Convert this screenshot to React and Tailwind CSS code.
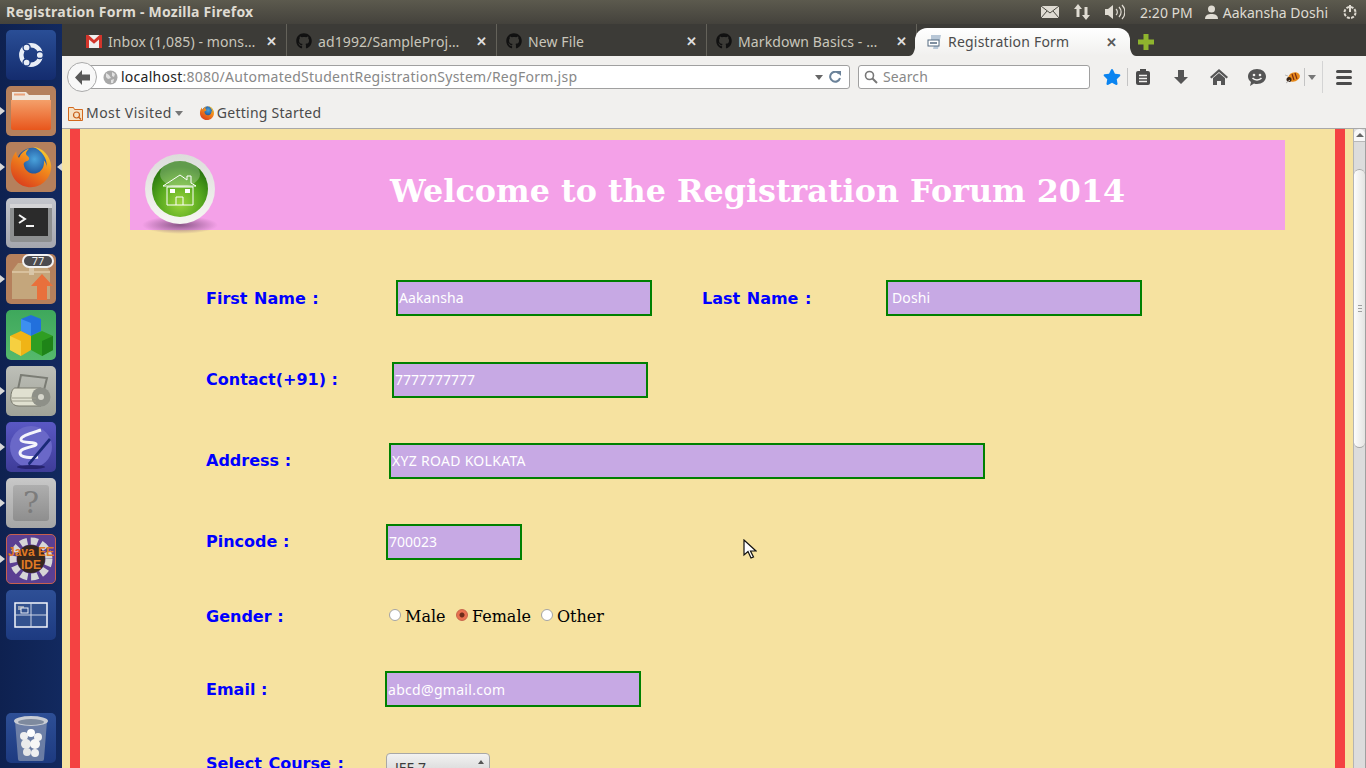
import { FaGithub, FaStar } from "react-icons/fa";

const uiFont = "font-['Noto_Sans','Open_Sans',sans-serif]";

function GmailIcon() {
    return (
        <svg width="16" height="13" viewBox="0 0 16 13" className="shrink-0">
            <rect x="0" y="0" width="16" height="13" fill="#eeeeee" />
            <path d="M0 0h2.500L8 5l5.500-5H16v13h-3V4.500L8 8.800 3 4.500V13H0z" fill="#d2352b" />
        </svg>
    );
}

function FirefoxIcon({ size = 16 }) {
    return (
        <svg width={size} height={size} viewBox="0 0 50 50" className="shrink-0">
            <defs>
                <radialGradient id="ffGlobe" cx="55%" cy="35%" r="60%">
                    <stop offset="0" stopColor="#4aa3dc" />
                    <stop offset="1" stopColor="#123a86" />
                </radialGradient>
                <linearGradient id="ffFox" x1="0.8" y1="0" x2="0.2" y2="1">
                    <stop offset="0" stopColor="#f9d22e" />
                    <stop offset="0.4" stopColor="#f28a1c" />
                    <stop offset="1" stopColor="#d8391c" />
                </linearGradient>
            </defs>
            <circle cx="27" cy="22" r="18" fill="url(#ffGlobe)" />
            <path d="M27 3C38 4 46 13 47 24 47 37 37 47 25 47 12 47 3 37 3 25 3 18 6 12 9 8 9 12 10 14 12 15 14 10 18 7 23 5 20 8 19 10 20 12 23 14 24 16 22 18 19 19 17 20 17 22 18 29 24 33 30 32 36 31 40 25 39 18 41 20 42 23 42 25 43 16 37 7 27 3Z" fill="url(#ffFox)" />
        </svg>
    );
}

function Tile({ className, children, left, right }) {
    return (
        <div className="relative w-[62px] h-[50px] shrink-0 flex justify-center">
            {left && <span className="absolute left-0 top-[21px] w-0 h-0 border-y-[4px] border-y-transparent border-l-[5px] border-l-[#d8d8d8]" />}
            {right && <span className="absolute right-0 top-[21px] w-0 h-0 border-y-[4px] border-y-transparent border-r-[5px] border-r-[#d8d8d8]" />}
            <div className={`w-[50px] h-[50px] rounded-[5px] flex items-center justify-center overflow-hidden ${className}`}>
                {children}
            </div>
        </div>
    );
}

function Launcher() {
    return (
        <div className="w-[62px] shrink-0 bg-gradient-to-r from-[#0e2150] to-[#12295f] flex flex-col gap-[6px] pt-[6px] pb-[5px]">
            <Tile className="bg-gradient-to-b from-[#2a4e96] to-[#142c6e]">
                <svg width="30" height="30" viewBox="0 0 34 34">
                    <circle cx="17" cy="17" r="11" fill="none" stroke="#e8edf6" strokeWidth="5" />
                    <circle cx="27" cy="17" r="4" fill="#e8edf6" stroke="#1e3c80" strokeWidth="1.500" />
                    <circle cx="12" cy="8.500" r="4" fill="#e8edf6" stroke="#1e3c80" strokeWidth="1.500" />
                    <circle cx="12" cy="25.500" r="4" fill="#e8edf6" stroke="#1e3c80" strokeWidth="1.500" />
                </svg>
            </Tile>
            <Tile left className="bg-[#b5805c]">
                <svg width="46" height="42" viewBox="0 0 46 42">
                    <defs>
                        <linearGradient id="folderFill" x1="0" y1="0" x2="0" y2="1">
                            <stop offset="0" stopColor="#f4a06a" />
                            <stop offset="1" stopColor="#e8561c" />
                        </linearGradient>
                    </defs>
                    <path d="M4 2h14l3 3h21v8H4z" fill="#efe6dc" />
                    <rect x="6" y="3.500" width="11" height="2" fill="#eaa27a" />
                    <path d="M3 10h40v28a2 2 0 0 1-2 2H5a2 2 0 0 1-2-2z" fill="url(#folderFill)" />
                </svg>
            </Tile>
            <Tile left right className="bg-[#b5805c]">
                <FirefoxIcon size={46} />
            </Tile>
            <Tile className="bg-gradient-to-b from-[#c4c6cc] to-[#a4a6ae]">
                <svg width="44" height="40" viewBox="0 0 44 40">
                    <rect x="1" y="1" width="42" height="38" rx="2" fill="#8d8f90" />
                    <rect x="1" y="1" width="42" height="4" fill="#d4d4d6" />
                    <rect x="5" y="5" width="34" height="28" fill="#2b2b2b" />
                    <path d="M10 12l6 4-6 4" fill="none" stroke="#f4f4f4" strokeWidth="2" />
                    <rect x="17" y="22" width="8" height="2" fill="#f4f4f4" />
                </svg>
            </Tile>
            <Tile left className="bg-[#b5805c] relative">
                <svg width="46" height="42" viewBox="0 0 46 42" className="mt-1">
                    <path d="M4 11l6-8h26l6 8v28H4z" fill="#c4a67c" />
                    <path d="M4 11h38v2H4z" fill="#d8c09c" />
                    <rect x="21" y="3" width="5" height="12" fill="#d8c6a8" />
                    <path d="M34 14l11 12h-6v14H29V26h-6z" fill="#e8703c" />
                </svg>
                <span className={`absolute right-[2px] top-0 w-[32px] h-[14px] rounded-full bg-[#4c4c50] border-2 border-[#f2f2f2] text-[#eeeeee] text-[11px] leading-[10px] text-center ${uiFont}`}>77</span>
            </Tile>
            <Tile className="bg-gradient-to-b from-[#3ea85c] to-[#55b96c]">
                <svg width="46" height="44" viewBox="0 0 46 44">
                    <path d="M13 6l10-4 10 4v12l-10 5-10-5z" fill="#2270dc" />
                    <path d="M13 6l10 4v13l-10-5z" fill="#3d8ff0" />
                    <path d="M2 23l11-5 10 5v14l-10 6-11-6z" fill="#f0b416" />
                    <path d="M2 23l11 5v15l-11-6z" fill="#f6d040" />
                    <path d="M23 23l11-5 11 5v14l-11 6-11-6z" fill="#2f9e22" />
                    <path d="M34 28l11-5v14l-11 6z" fill="#1f8418" />
                </svg>
            </Tile>
            <Tile left className="bg-gradient-to-b from-[#bdbfb8] to-[#a0a298]">
                <svg width="44" height="38" viewBox="0 0 44 38">
                    <path d="M12 3l26 3-4 16H8z" fill="none" stroke="#7a7c74" strokeWidth="2" />
                    <path d="M6 16h26v18H10c-6 0-9-4-8-10 0-4 2-8 4-8z" fill="#e0e0d0" stroke="#77776a" strokeWidth="1" />
                    <circle cx="32" cy="25" r="9.500" fill="#8e9088" />
                    <circle cx="32" cy="25" r="3" fill="#d6d6cc" />
                    <path d="M3 26h24M3 29h24" stroke="#9c9c8c" strokeWidth="1" />
                </svg>
            </Tile>
            <Tile left className="bg-gradient-to-b from-[#5a58c4] to-[#3e3c98]">
                <svg width="46" height="46" viewBox="0 0 46 46">
                    <circle cx="23" cy="23" r="21" fill="#6a68c8" />
                    <path d="M33 6C24 9 12 12 13 16c1 4 14 1 15 4 1 3-16 3-16 9 0 5 12 5 18 4" fill="none" stroke="#f4f4fb" strokeWidth="3" />
                    <path d="M43 16L21 42l-1-3 21-25z" fill="#1a2a78" />
                    <ellipse cx="23" cy="43" rx="14" ry="2" fill="#26246e" />
                </svg>
            </Tile>
            <Tile left className="bg-gradient-to-b from-[#c8c8c8] to-[#a6a6a6]">
                <div className="w-[36px] h-[36px] rounded-[3px] bg-gradient-to-b from-[#aeaeae] to-[#8e8e8e] flex items-center justify-center text-[#7c7c7c] text-[30px] leading-none font-['DejaVu_Serif',serif]">?</div>
            </Tile>
            <Tile left className="bg-[#5b3f92] border border-[#c8604e] relative">
                <svg width="48" height="48" viewBox="0 0 48 48">
                    <circle cx="24" cy="24" r="18" fill="none" stroke="#d6d6d6" strokeWidth="7" strokeDasharray="7 3.500" />
                    <circle cx="24" cy="24" r="14" fill="#34261e" />
                </svg>
                <span className="absolute inset-0 flex items-center justify-center text-center whitespace-nowrap text-[#e07a24] text-[12px] leading-[13px] font-bold font-['Liberation_Sans',sans-serif]">Java EE<br />IDE</span>
            </Tile>
            <Tile className="bg-gradient-to-b from-[#2e4f96] to-[#1d3a80]">
                <svg width="34" height="26" viewBox="0 0 34 26">
                    <rect x="1" y="1" width="32" height="24" fill="#33528f" stroke="#f4f6fb" strokeWidth="1.500" />
                    <path d="M17 1v24M1 13h32" stroke="#cfd6e6" strokeWidth="1" />
                    <rect x="4" y="4" width="6" height="4" fill="#99a2b4" />
                    <rect x="7" y="6" width="7" height="5" fill="#33528f" stroke="#eef0f6" strokeWidth="1" />
                </svg>
            </Tile>
            <div className="mt-auto">
                <Tile className="bg-gradient-to-b from-[#2e4f96] to-[#1d3a80]">
                    <svg width="36" height="46" viewBox="0 0 36 46">
                        <path d="M2 6h32l-3 38a2 2 0 0 1-2 2H7a2 2 0 0 1-2-2z" fill="#8a97b0" opacity="0.700" />
                        <ellipse cx="18" cy="6" rx="17" ry="5" fill="#c8ccd4" />
                        <ellipse cx="18" cy="7" rx="13" ry="3" fill="#7e8a9e" />
                        <circle cx="11" cy="21" r="4" fill="#f0f0f0" />
                        <circle cx="18" cy="18" r="4" fill="#ffffff" />
                        <circle cx="25" cy="22" r="4" fill="#f2f2f2" />
                        <circle cx="13" cy="29" r="5" fill="#ebebeb" />
                        <circle cx="22" cy="29" r="5" fill="#f6f6f6" />
                        <circle cx="14" cy="37" r="4" fill="#e6e6e6" />
                        <circle cx="22" cy="38" r="4" fill="#f0f0f0" />
                    </svg>
                </Tile>
            </div>
        </div>
    );
}

function TabItem({ icon, title }) {
    return (
        <div className="w-[210px] h-8 shrink-0 flex items-center pt-[2px] pl-[10px] pr-[10px] border-r border-[#64625a]">
            <span className="w-[16px] -ml-[1px] flex justify-center shrink-0">{icon}</span>
            <span className="ml-[6px] flex-1 truncate text-[14px] tracking-[0.1px] text-[#c9c6bb]">{title}</span>
            <span className="text-[13px] font-bold text-[#dddddd] leading-none -mr-[1px]">✕</span>
        </div>
    );
}

function TabBar() {
    return (
        <div className="h-8 bg-[#3c3b37] flex items-end pl-[15px] relative">
            <TabItem icon={<GmailIcon />} title="Inbox (1,085) - mons…" />
            <TabItem icon={<FaGithub size={16} color="#111111" />} title="ad1992/SampleProj…" />
            <TabItem icon={<FaGithub size={16} color="#111111" />} title="New File" />
            <TabItem icon={<FaGithub size={16} color="#111111" />} title="Markdown Basics - …" />
            <div className="relative w-[215px] h-[28px] shrink-0 -ml-[2px] flex items-center pl-[12px] pr-[10px] rounded-t-[12px] bg-gradient-to-b from-[#ffffff] to-[#f1f0ee]">
                <svg width="6" height="8" viewBox="0 0 6 8" className="absolute -left-[6px] bottom-0">
                    <path d="M6 0v8H0c3 0 5-3 6-8z" fill="#f1f0ee" />
                </svg>
                <svg width="6" height="8" viewBox="0 0 6 8" className="absolute -right-[6px] bottom-0">
                    <path d="M0 0v8h6C3 8 1 5 0 0z" fill="#f1f0ee" />
                </svg>
                <svg width="16" height="16" viewBox="0 0 16 16" className="shrink-0">
                    <path d="M4 1h10l-3 14H6l2-8H4z" fill="#b7c6d6" />
                    <rect x="1" y="6" width="11" height="6" fill="#ffffff" stroke="#546a80" strokeWidth="1" />
                    <path d="M3 9h7" stroke="#546a80" strokeWidth="1.500" />
                </svg>
                <span className="ml-[5px] pb-[2px] flex-1 truncate text-[14px] tracking-[0.2px] text-[#4c4c4c]">Registration Form</span>
                <span className="text-[13px] font-bold text-[#5a5a5a] leading-none mr-[3px]">✕</span>
            </div>
            <svg width="16" height="16" viewBox="0 0 16 16" className="ml-[8px] mb-[6px] shrink-0">
                <path d="M5.500 0h5v5.500H16v5h-5.500V16h-5v-5.500H0v-5h5.500z" fill="#8fb52e" />
            </svg>
        </div>
    );
}

function NavBar() {
    return (
        <div className="h-[42px] bg-[#f1f0ee] flex items-center pl-[5px] text-[#4d4d4d]">
            <div className="relative z-10 w-[30px] h-[30px] rounded-full bg-[#f8f8f8] border border-[#aaaaaa] flex items-center justify-center -mr-[13px]">
                <svg width="17" height="15" viewBox="0 0 17 15">
                    <path d="M8 0L1 7.500 8 15v-4.500h8v-6H8z" fill="#585858" />
                </svg>
            </div>
            <div className="w-[766px] h-[24px] shrink-0 bg-white border border-[#a0a0a0] rounded-[3px] flex items-center pl-[19px] pr-[8px]">
                <svg width="15" height="15" viewBox="0 0 15 15" className="shrink-0 -ml-[1px]">
                    <circle cx="7.500" cy="7.500" r="7" fill="#a8a8a8" />
                    <path d="M3 3l3 2 2 3-3 1-2-2zM9 2l3 2-1 3-2-1zM8 10l3-1-1 4-2 0z" fill="#e2e2e2" />
                </svg>
                <span className="ml-[3px] pb-[2px] flex-1 text-[14px] tracking-[0.26px] whitespace-nowrap text-[#888888]"><span className="text-[#222222]">localhost</span>:8080/AutomatedStudentRegistrationSystem/RegForm.jsp</span>
                <span className="w-0 h-0 border-x-[4px] border-x-transparent border-t-[5px] border-t-[#666666]" />
                <svg width="12" height="12" viewBox="0 0 12 12" className="ml-[6px]">
                    <path d="M10 2.500A5 5 0 1 0 11 7" fill="none" stroke="#6b8299" strokeWidth="2" />
                    <path d="M7 0h5v5z" fill="#6b8299" />
                </svg>
            </div>
            <div className="w-[232px] h-[24px] shrink-0 ml-[8px] bg-white border border-[#a0a0a0] rounded-[3px] flex items-center pl-[5px]">
                <svg width="14" height="14" viewBox="0 0 14 14">
                    <circle cx="5.500" cy="5.500" r="4" fill="none" stroke="#777777" strokeWidth="1.600" />
                    <path d="M8.500 8.500L13 13" stroke="#777777" strokeWidth="2" />
                </svg>
                <span className="ml-[5px] pb-[2px] text-[14px] tracking-[0.1px] text-[#888888]">Search</span>
            </div>
            <FaStar size={18} color="#0a84f0" className="ml-[13px] shrink-0" />
            <span className="w-px h-[18px] bg-[#c4c4c4] ml-[6px]" />
            <svg width="16" height="16" viewBox="0 0 16 16" className="ml-[7px] shrink-0">
                <rect x="1" y="2" width="14" height="14" rx="2" fill="#4b4b4b" />
                <rect x="5" y="0" width="6" height="4" fill="#4b4b4b" />
                <path d="M4 6.500h8M4 9.500h8M4 12.500h8" stroke="#f1f0ee" strokeWidth="1.400" />
            </svg>
            <svg width="16" height="16" viewBox="0 0 16 16" className="ml-[22px] shrink-0">
                <path d="M5 1h6v7h4l-7 7-7-7h4z" fill="#555555" />
            </svg>
            <svg width="18" height="16" viewBox="0 0 18 16" className="ml-[21px] shrink-0">
                <path d="M9 0l9 8-1.500 1.500L9 3 1.500 9.500 0 8z" fill="#555555" />
                <path d="M3 9l6-5 6 5v7h-4v-4H7v4H3z" fill="#555555" />
            </svg>
            <svg width="18" height="17" viewBox="0 0 18 17" className="ml-[20px] shrink-0">
                <path d="M9 0c5 0 9 3 9 7.500S14 15 9 15c-1 0-2 0-3-.500L2 17l1-4C1 11.500 0 9.500 0 7.500 0 3 4 0 9 0z" fill="#555555" />
                <circle cx="6" cy="6" r="1.300" fill="#f1f0ee" />
                <circle cx="12" cy="6" r="1.300" fill="#f1f0ee" />
                <path d="M4.500 9c2 2.500 7 2.500 9 0" fill="none" stroke="#f1f0ee" strokeWidth="1.500" />
            </svg>
            <svg width="16" height="14" viewBox="0 0 16 14" className="ml-[19px] shrink-0">
                <ellipse cx="9" cy="7" rx="6" ry="4.500" fill="#e88a1a" transform="rotate(-20 9 7)" />
                <circle cx="4" cy="9.500" r="2.500" fill="#3a2414" />
                <path d="M7 4l2 6M10 3l2 6" stroke="#7a2c10" strokeWidth="1.200" />
                <path d="M1 13l4-3M3 6L0 5" stroke="#b8b8b8" strokeWidth="1" />
            </svg>
            <span className="w-px h-[18px] bg-[#c4c4c4] ml-[3px]" />
            <span className="w-0 h-0 ml-[3px] border-x-[4px] border-x-transparent border-t-[5px] border-t-[#777777]" />
            <span className="w-px h-[32px] bg-[#d4d4d4] ml-[6px]" />
            <div className="ml-[13px] flex flex-col gap-[3px]">
                <span className="w-4 h-[3px] rounded-sm bg-[#4b4b4b]" />
                <span className="w-4 h-[3px] rounded-sm bg-[#4b4b4b]" />
                <span className="w-4 h-[3px] rounded-sm bg-[#4b4b4b]" />
            </div>
        </div>
    );
}

function BookmarksBar() {
    return (
        <div className="h-[31px] bg-[#f1f0ee] border-b border-[#a8a8a8] flex items-center pl-[6px] text-[14px] text-[#4a4a4a]">
            <svg width="15" height="15" viewBox="0 0 15 15" className="shrink-0">
                <path d="M.5 1.500h5l1 2h8v11H.5z" fill="#f6e2c4" stroke="#d2691e" strokeWidth="1" />
                <circle cx="8.500" cy="9" r="3" fill="none" stroke="#c8601a" strokeWidth="1.200" />
                <path d="M10.500 11l2.500 2.500" stroke="#c8601a" strokeWidth="1.200" />
            </svg>
            <span className="ml-[3px] pb-[2px] tracking-[0.45px]">Most Visited</span>
            <span className="ml-[3px] w-0 h-0 border-x-[4px] border-x-transparent border-t-[5px] border-t-[#777777]" />
            <span className="ml-[16px]"><FirefoxIcon size={16} /></span>
            <span className="ml-[2px] pb-[2px] tracking-[0.25px]">Getting Started</span>
        </div>
    );
}

function Scrollbar() {
    return (
        <div className="w-[13px] shrink-0 bg-[#dcdcdc] border-r border-[#a0a0a0] border-l border-l-[#b4b4b4] flex flex-col">
            <div className="h-[13px] bg-[#f8f8f8] rounded-t-full flex items-center justify-center border-b border-[#b8b8b8]">
                <span className="w-0 h-0 border-x-[4px] border-x-transparent border-b-[4px] border-b-[#666666]" />
            </div>
            <div className="mt-[27px] h-[279px] rounded-full bg-gradient-to-r from-[#fdfdfd] to-[#e4e4e2] border-y border-[#a8a8a8] flex flex-col items-center justify-center gap-[2px]">
                <span className="w-[4px] h-px bg-[#a0a0a0]" />
                <span className="w-[4px] h-px bg-[#a0a0a0]" />
                <span className="w-[4px] h-px bg-[#a0a0a0]" />
            </div>
        </div>
    );
}

function Banner() {
    return (
        <div className="ml-[50px] w-[1155px] h-[90px] bg-[#f4a1e8] flex items-start">
            <svg width="78" height="84" viewBox="0 0 78 84" className="ml-[11px] mt-[11px] shrink-0">
                <defs>
                    <radialGradient id="ballGreen" cx="50%" cy="75%" r="65%">
                        <stop offset="0" stopColor="#9ad43c" />
                        <stop offset="0.6" stopColor="#56a81e" />
                        <stop offset="1" stopColor="#2c7a10" />
                    </radialGradient>
                    <linearGradient id="ballRim" x1="0" y1="0" x2="0" y2="1">
                        <stop offset="0" stopColor="#dcdcda" />
                        <stop offset="1" stopColor="#f6f6f2" />
                    </linearGradient>
                    <radialGradient id="ballShadow" cx="50%" cy="50%" r="50%">
                        <stop offset="0" stopColor="#7a4a78" stopOpacity="0.850" />
                        <stop offset="1" stopColor="#7a4a78" stopOpacity="0" />
                    </radialGradient>
                </defs>
                <ellipse cx="39" cy="74" rx="38" ry="9" fill="url(#ballShadow)" />
                <circle cx="39" cy="38" r="35" fill="url(#ballRim)" />
                <circle cx="39" cy="38" r="28" fill="url(#ballGreen)" />
                <ellipse cx="39" cy="23" rx="20" ry="13" fill="#ffffff" opacity="0.250" />
                <path d="M22 35l17-11 7 5v-4h4v7l5 3z" fill="none" stroke="#ffffff" strokeWidth="1" />
                <path d="M26 36h26v18H26z" fill="none" stroke="#ffffff" strokeWidth="1" />
                <path d="M35 54v-8h7v8" fill="none" stroke="#ffffff" strokeWidth="1" />
                <rect x="29" y="38" width="5" height="4" fill="#ffffff" />
                <rect x="44" y="38" width="5" height="4" fill="#ffffff" />
            </svg>
            <h1 className="ml-[171px] h-full pt-[11px] flex items-center text-[31.8px] font-bold text-white whitespace-nowrap font-['DejaVu_Serif',serif]">Welcome to the Registration Forum 2014</h1>
        </div>
    );
}

function Label({ className, children }) {
    return <label className={`text-[16px] leading-6 font-bold text-[#0000ff] whitespace-nowrap font-['DejaVu_Sans',sans-serif] ${className}`}>{children}</label>;
}

function Field({ className, value }) {
    return (
        <input
            defaultValue={value}
            className={`h-[36px] shrink-0 bg-[#c7a9e4] border-2 border-[#008000] text-[14px] text-white outline-none ${uiFont} ${className}`}
        />
    );
}

function Radio({ checked }) {
    return (
        <input
            type="radio"
            name="gender"
            defaultChecked={checked}
            className={`appearance-none w-[12px] h-[12px] -mt-[2px] rounded-full border border-[#a4a4a4] shrink-0 ${checked ? "bg-[radial-gradient(circle,#6e2c1a_0_2px,#ea7150_3px)] border-[#c8634a]" : "bg-white"}`}
        />
    );
}

function Form() {
    return (
        <form className="ml-[126px]">
            <div className="mt-[50px] flex items-center">
                <Label className="w-[190px] mt-[2px] [word-spacing:1px]">First Name :</Label>
                <Field className="w-[256px] pl-px pb-[1px] tracking-[0.1px]" value="Aakansha" />
                <Label className="ml-[50px] w-[184px] mt-[2px] [word-spacing:1px]">Last Name :</Label>
                <Field className="w-[256px] pl-[4px] pb-[1px] tracking-[0.1px]" value="Doshi" />
            </div>
            <div className="mt-[46px] flex items-center">
                <Label className="w-[186px]">Contact(+91) :</Label>
                <Field className="w-[256px] pl-px pb-[2px]" value="7777777777" />
            </div>
            <div className="mt-[45px] flex items-center">
                <Label className="w-[183px]">Address :</Label>
                <Field className="w-[596px] pl-px pb-[2px] tracking-[0.3px]" value="XYZ ROAD KOLKATA" />
            </div>
            <div className="mt-[45px] flex items-center">
                <Label className="w-[180px]">Pincode :</Label>
                <Field className="w-[136px] pl-px pb-[2px]" value="700023" />
            </div>
            <div className="mt-[44px] h-6 flex items-center">
                <Label className="w-[183px] mt-[2px]">Gender :</Label>
                <Radio />
                <span className="ml-[4px] mt-[2px] w-[51px] text-[16px] text-black font-['DejaVu_Serif',serif]">Male</span>
                <Radio checked />
                <span className="ml-[4px] mt-[2px] w-[69px] text-[16px] text-black font-['DejaVu_Serif',serif]">Female</span>
                <Radio />
                <span className="ml-[4px] mt-[2px] text-[16px] text-black font-['DejaVu_Serif',serif]">Other</span>
            </div>
            <div className="mt-[43px] flex items-center">
                <Label className="w-[179px] mt-[2px]">Email :</Label>
                <Field className="w-[256px] pl-px tracking-[0.3px]" value="abcd@gmail.com" />
            </div>
            <div className="mt-[44px] flex items-start">
                <Label className="w-[180px] mt-px [word-spacing:1px]">Select Course :</Label>
                <div className="relative mt-0.5">
                    <select className={`appearance-none w-[104px] h-[28px] pl-2 rounded-[4px] border border-[#a8a8a8] bg-gradient-to-b from-[#f2f2f2] to-[#cfcfcf] text-[14px] text-[#3c3c3c] ${uiFont}`}>
                        <option>JEE 7</option>
                    </select>
                    <span className="absolute right-[6px] top-[7px] w-0 h-0 border-x-[3px] border-x-transparent border-b-[4px] border-b-[#555555]" />
                </div>
            </div>
        </form>
    );
}

export default function App() {
    return (
        <div className={`w-[1366px] h-[768px] overflow-hidden flex flex-col ${uiFont}`}>
            {/* Ubuntu top panel */}
            <div className="h-6 shrink-0 bg-gradient-to-b from-[#5c5a4e] to-[#44423c] flex items-center pl-[6px] text-[#dfdbd2]">
                <span className="text-[14px] font-bold tracking-[0.23px] pb-[2px]">Registration Form - Mozilla Firefox</span>
                <div className="ml-auto flex items-center">
                    <svg width="18" height="12" viewBox="0 0 18 12">
                        <rect width="18" height="12" fill="#dfdbd2" />
                        <path d="M0 0l9 7 9-7M0 12l6-7M18 12l-6-7" fill="none" stroke="#4a4840" strokeWidth="1" />
                    </svg>
                    <svg width="18" height="16" viewBox="0 0 18 16" className="ml-[14px]">
                        <path d="M5 0l4 5H6.500v8h-3V5H1zM13 16l-4-5h2.500V3h3v8H17z" fill="#dfdbd2" />
                    </svg>
                    <svg width="20" height="16" viewBox="0 0 20 16" className="ml-[14px]">
                        <path d="M0 5h3l5-4v14l-5-4H0z" fill="#dfdbd2" />
                        <path d="M11 5a4 4 0 0 1 0 6M14 3a7 7 0 0 1 0 10M17 1a10 10 0 0 1 0 14" fill="none" stroke="#dfdbd2" strokeWidth="1.200" />
                    </svg>
                    <span className="ml-[15px] text-[14px]">2:20 PM</span>
                    <svg width="13" height="14" viewBox="0 0 13 14" className="ml-[12px]">
                        <circle cx="6.500" cy="4" r="3.500" fill="#dfdbd2" />
                        <path d="M0 14c0-4 3-5 6.500-5s6.500 1 6.500 5z" fill="#dfdbd2" />
                    </svg>
                    <span className="ml-[5px] text-[14px]">Aakansha Doshi</span>
                    <svg width="16" height="16" viewBox="0 0 16 16" className="ml-[14px] mr-[8px]">
                        <circle cx="8" cy="8.500" r="5.500" fill="none" stroke="#dfdbd2" strokeWidth="2" strokeDasharray="3 1.300" />
                        <path d="M8 1v7" stroke="#dfdbd2" strokeWidth="2" />
                    </svg>
                </div>
            </div>

            <div className="flex-1 flex min-h-0">
                <Launcher />

                {/* Browser window */}
                <div className="flex-1 min-w-0 flex flex-col">
                    <TabBar />
                    <NavBar />
                    <BookmarksBar />

                    <div className="flex-1 min-h-0 flex relative">
                        <div className="flex-1 min-w-0 bg-[#f6e2a0] px-2">
                            <div className="h-full overflow-hidden border-x-[10px] border-[#f44242] pt-[11px]">
                                <Banner />
                                <Form />
                            </div>
                        </div>
                        <Scrollbar />
                        {/* Mouse pointer */}
                        <svg width="14" height="20" viewBox="0 0 14 20" className="absolute left-[681px] top-[410px]">
                            <path d="M1 1v15l4-3.500L8 19l2.500-1-3-6H13z" fill="#ffffff" stroke="#111111" strokeWidth="1.200" />
                        </svg>
                    </div>
                </div>
            </div>
        </div>
    );
}
